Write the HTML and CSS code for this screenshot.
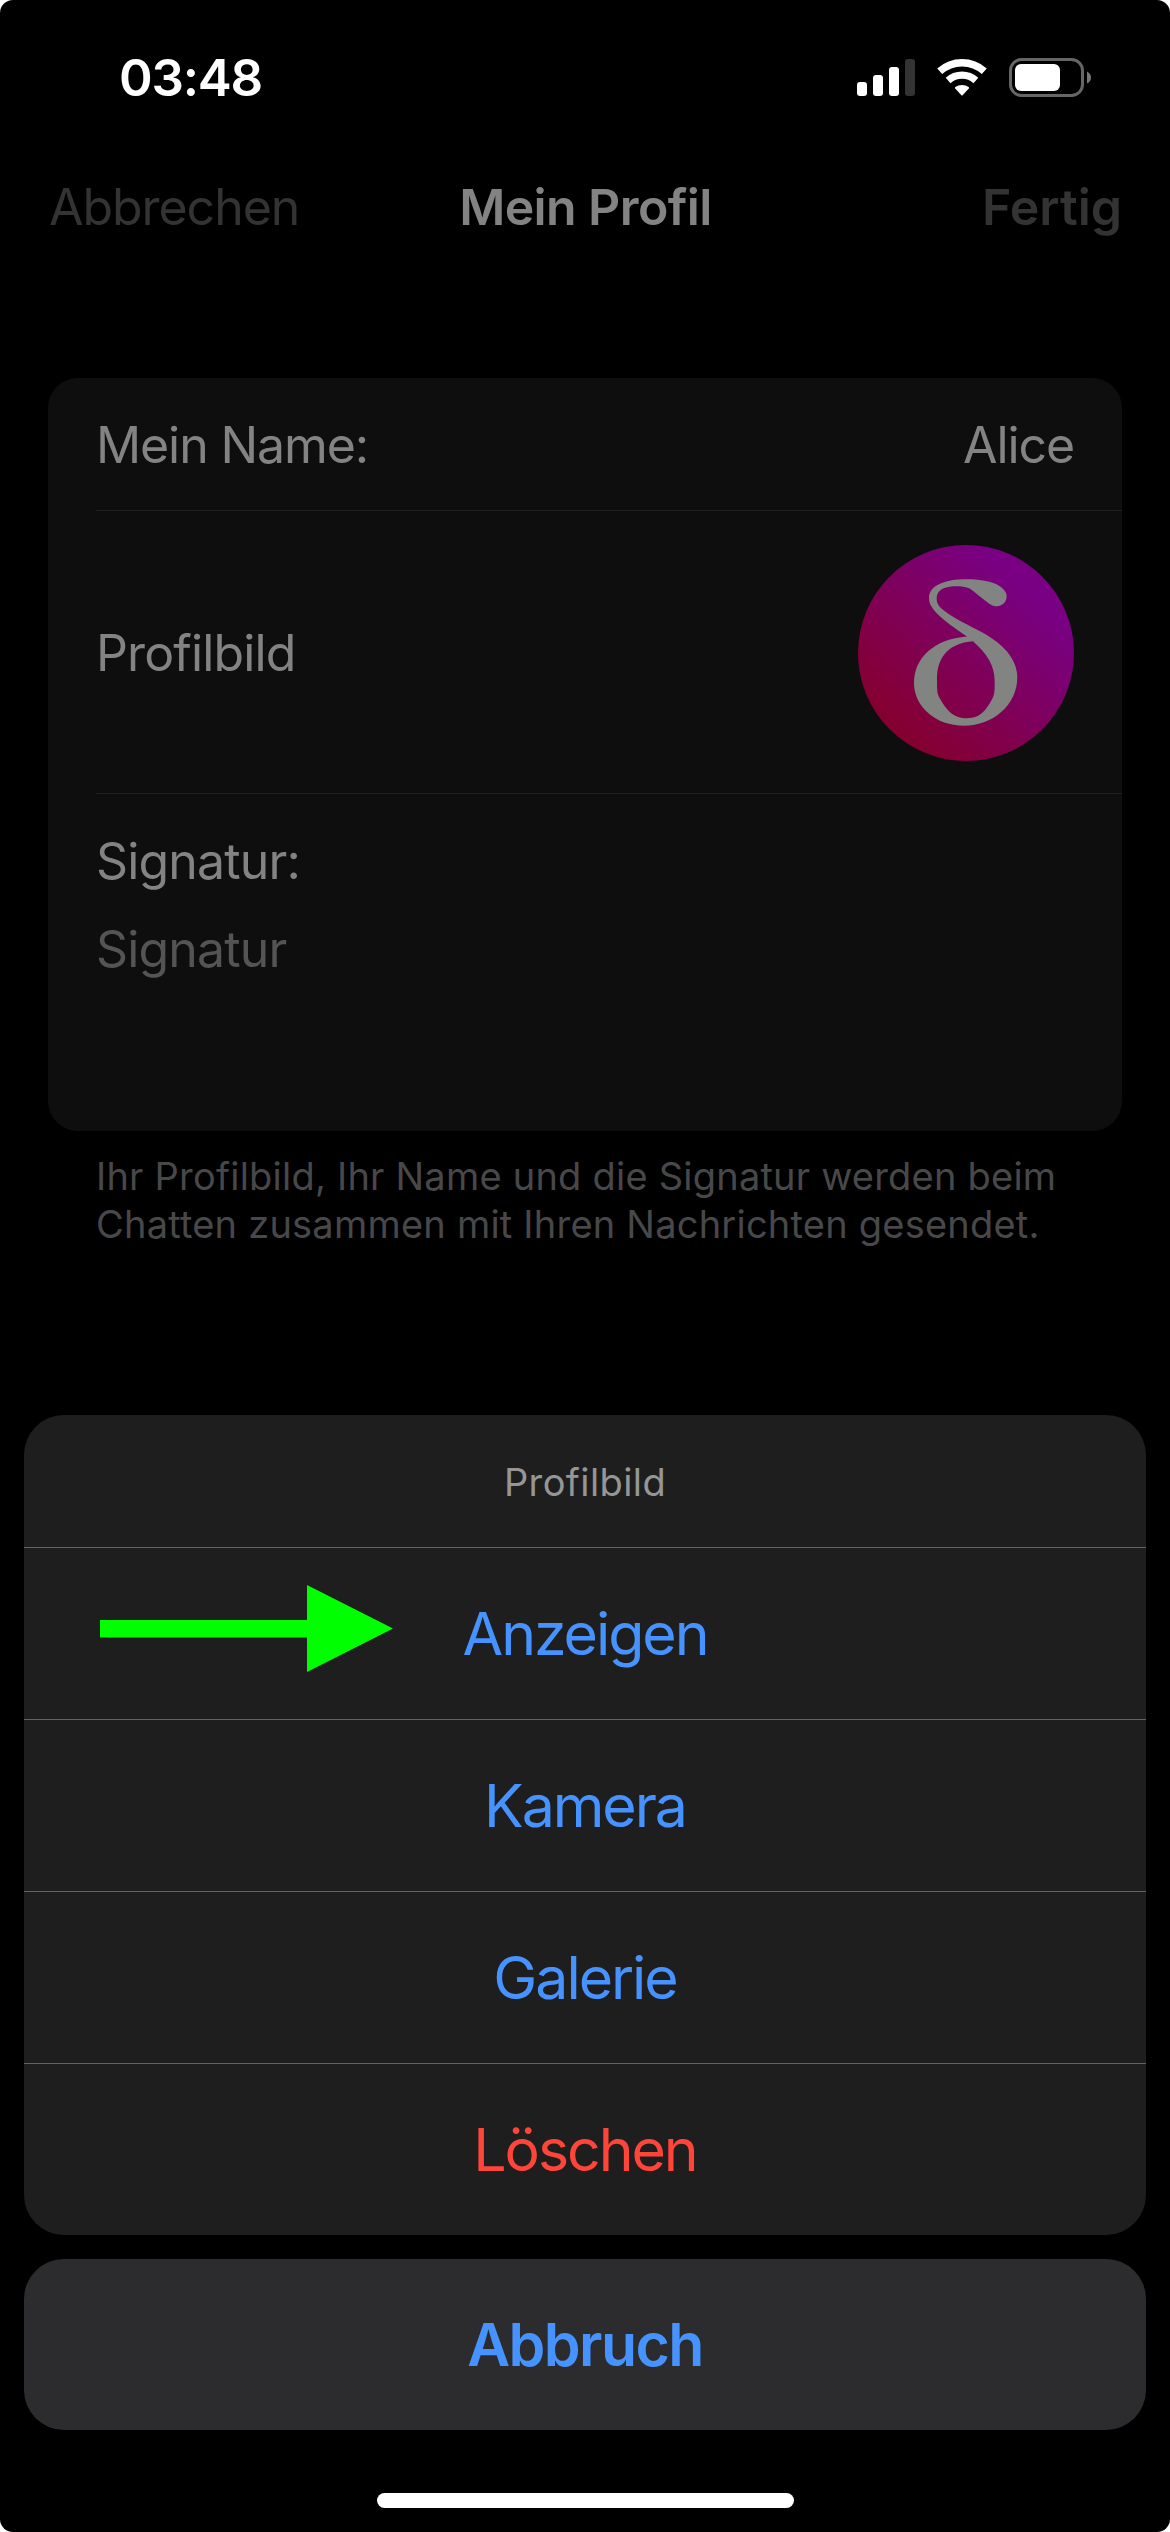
FILE: index.html
```html
<!DOCTYPE html>
<html lang="de">
<head>
  <meta charset="UTF-8" />
  <meta name="viewport" content="width=device-width, initial-scale=1.0"/>
  <title>Mein Profil</title>
  <link rel="stylesheet" href="styles.css">
</head>
<body>
  <div class="screen">
    <div class="status-bar">
      <span class="time">03:48</span>
      <div class="status-icons">
        <svg class="signal" width="58" height="37" viewBox="0 0 58 37">
          <rect x="0" y="23" width="10" height="14" rx="3" fill="#fff"/>
          <rect x="16" y="16" width="10" height="21" rx="3" fill="#fff"/>
          <rect x="32" y="8" width="10" height="29" rx="3" fill="#fff"/>
          <rect x="48" y="0" width="10" height="37" rx="3" fill="#333"/>
        </svg>
        <svg class="wifi" width="50" height="37" viewBox="0 0 50 37">
          <g fill="none" stroke="#fff">
            <path d="M2.7 12.3A33.3 33.3 0 0 1 47.3 12.3" stroke-width="7.4"/>
            <path d="M11.1 21.5A20.8 20.8 0 0 1 38.9 21.5" stroke-width="7.2"/>
          </g>
          <path d="M18.2 29.4Q17.6 28.7 18.3 28.1A11.3 11.3 0 0 1 31.7 28.1Q32.4 28.7 31.8 29.4L25.6 36.2Q25 36.8 24.4 36.2Z" fill="#fff"/>
        </svg>
        <svg class="battery" width="82" height="39" viewBox="0 0 82 39">
          <rect x="1.5" y="1.5" width="72" height="36" rx="11" fill="none" stroke="#666" stroke-width="3"/>
          <rect x="6" y="6" width="45" height="27" rx="6" fill="#fff"/>
          <path d="M78 13.5Q82 15.5 82 19.5T78 25.5Z" fill="#777"/>
        </svg>
      </div>
    </div>

    <div class="navbar">
      <span class="nav-cancel">Abbrechen</span>
      <span class="nav-title">Mein Profil</span>
      <span class="nav-done">Fertig</span>
    </div>

    <div class="card">
      <div class="row row-name">
        <span>Mein Name:</span>
        <span class="name">Alice</span>
      </div>
      <div class="row row-avatar">
        <span>Profilbild</span>
        <svg class="avatar" width="216" height="216" viewBox="0 0 216 216">
          <defs>
            <linearGradient id="avatarFill" x1="0.15" y1="0.85" x2="0.75" y2="0.2">
              <stop offset="0" stop-color="#85002e"/>
              <stop offset="1" stop-color="#790082"/>
            </linearGradient>
          </defs>
          <circle cx="108" cy="108" r="108" fill="url(#avatarFill)"/>
          <path fill="#828482" fill-rule="evenodd" d="M109 91.5C97 83 86 76 79 68.5C73 62 71 58 71 53C71 40 88 34.3 108 34.3C121 34.3 131 36 138 39C144 42 148.7 46.5 148.7 51C148.7 57 144 61.3 138.7 61.3C134 61.3 131 58.5 127 55.5C119 49.5 115 45 110.3 43C105 40.8 95 40.5 88 42.5C81.5 44.5 78.7 48 78.7 53.5C78.7 58.5 81 61.5 85.3 65C92 70.5 101 75.5 108.7 79.3C117 84 126.5 88 134 93.5C150 104 159.3 118 159.3 132C159.3 160 135 180.7 106 180.7C78 180.7 56 162 56 138C56 113 76 94 109 91.5ZM115 96.3C93 98 79 110 79 134C79 146 79 149 82.5 154.5C89 166.5 97 173.3 108 173.3C119 173.3 125 169 131 159.5C136.5 151 136.7 149 136.7 137C136.7 120 129 109 115 96.3Z"/>
        </svg>
      </div>
      <div class="row-signature">
        <div>Signatur:</div>
        <div class="placeholder">Signatur</div>
      </div>
    </div>
    <p class="hint">Ihr Profilbild, Ihr Name und die Signatur werden beim<br>Chatten zusammen mit Ihren Nachrichten gesendet.</p>

    <div class="sheet">
      <div class="sheet-actions">
        <div class="sheet-title">Profilbild</div>
        <button class="action">
          Anzeigen
          <svg class="arrow" width="293" height="87" viewBox="0 0 293 87">
            <path d="M0 35H207V0L293 43.5L207 87V52.5H0Z" fill="#0f0"/>
          </svg>
        </button>
        <button class="action">Kamera</button>
        <button class="action">Galerie</button>
        <button class="action delete">Löschen</button>
      </div>
      <button class="sheet-cancel">Abbruch</button>
      <div class="home-indicator"></div>
    </div>
  </div>
</body>
</html>
```
FILE: styles.css
```css
body {
  margin: 0;
  background: #fff;
  font-family: Inter, 'Liberation Sans', sans-serif;
}

.screen {
  position: relative;
  height: 2532px;
  background: #000;
  border-radius: 13px;
  overflow: hidden;
}

.status-bar {
  height: 155px;
  padding: 0 79px 0 119px;
  display: flex;
  align-items: center;
  justify-content: space-between;
}

.time {
  font-size: 51px;
  font-weight: 600;
  letter-spacing: -1.2px;
  color: #fff;
}

.status-icons {
  display: flex;
  align-items: center;
  gap: 22px;
}

.navbar {
  height: 103px;
  padding: 0 48px 0 49px;
  display: grid;
  grid-template-columns: 1fr auto 1fr;
  align-items: center;
  font-size: 50px;
  color: #333;
}

.nav-cancel {
  letter-spacing: -1.05px;
}

.nav-title {
  font-weight: 600;
  letter-spacing: -0.6px;
  color: #838383;
}

.nav-done {
  font-weight: 600;
  text-align: right;
}

.card {
  box-sizing: border-box;
  height: 753px;
  margin: 120px 48px 0;
  background: #0e0e0e;
  border-radius: 30px;
  font-size: 50px;
  line-height: 60px;
  letter-spacing: -0.85px;
  color: #838383;
}

.row {
  margin-left: 48px;
  padding-right: 48px;
  display: flex;
  align-items: center;
  justify-content: space-between;
  border-bottom: 1px solid #212122;
}

.row-name {
  height: 130px;
  padding-top: 2px;
  letter-spacing: -1.1px;
}

.row-avatar {
  padding-top: 34px;
  padding-bottom: 32px;
}

.row-signature {
  padding: 37px 48px 0;
}

.placeholder {
  margin-top: 28px;
  color: #545454;
}

.hint {
  margin: 21px 96px 0;
  font-size: 38px;
  line-height: 48px;
  letter-spacing: 0.22px;
  color: #48484a;
}

.sheet {
  position: absolute;
  left: 24px;
  right: 24px;
  bottom: 24px;
}

.sheet-actions {
  background: #1e1e1e;
  border-radius: 40px;
}

.sheet-title {
  height: 132px;
  line-height: 135px;
  text-align: center;
  font-size: 38px;
  letter-spacing: 0.4px;
  color: #969696;
}

button {
  display: block;
  width: 100%;
  padding: 0;
  border: none;
  background: none;
  font-family: inherit;
  font-size: 59px;
  color: #4693ff;
}

.action {
  position: relative;
  height: 172px;
  border-top: 1px solid #636365;
  letter-spacing: -2.05px;
}

.delete {
  color: #ff453a;
}

/* sits on top of the first action */
.arrow {
  position: absolute;
  left: 76px;
  top: 37px;
}

.sheet-cancel {
  height: 171px;
  margin-top: 24px;
  background: #2c2c2e;
  border-radius: 40px;
  font-weight: 600;
  letter-spacing: -1.6px;
}

.home-indicator {
  width: 417px;
  height: 15px;
  margin: 63px auto 0;
  border-radius: 8px;
  background: #fff;
}
```
